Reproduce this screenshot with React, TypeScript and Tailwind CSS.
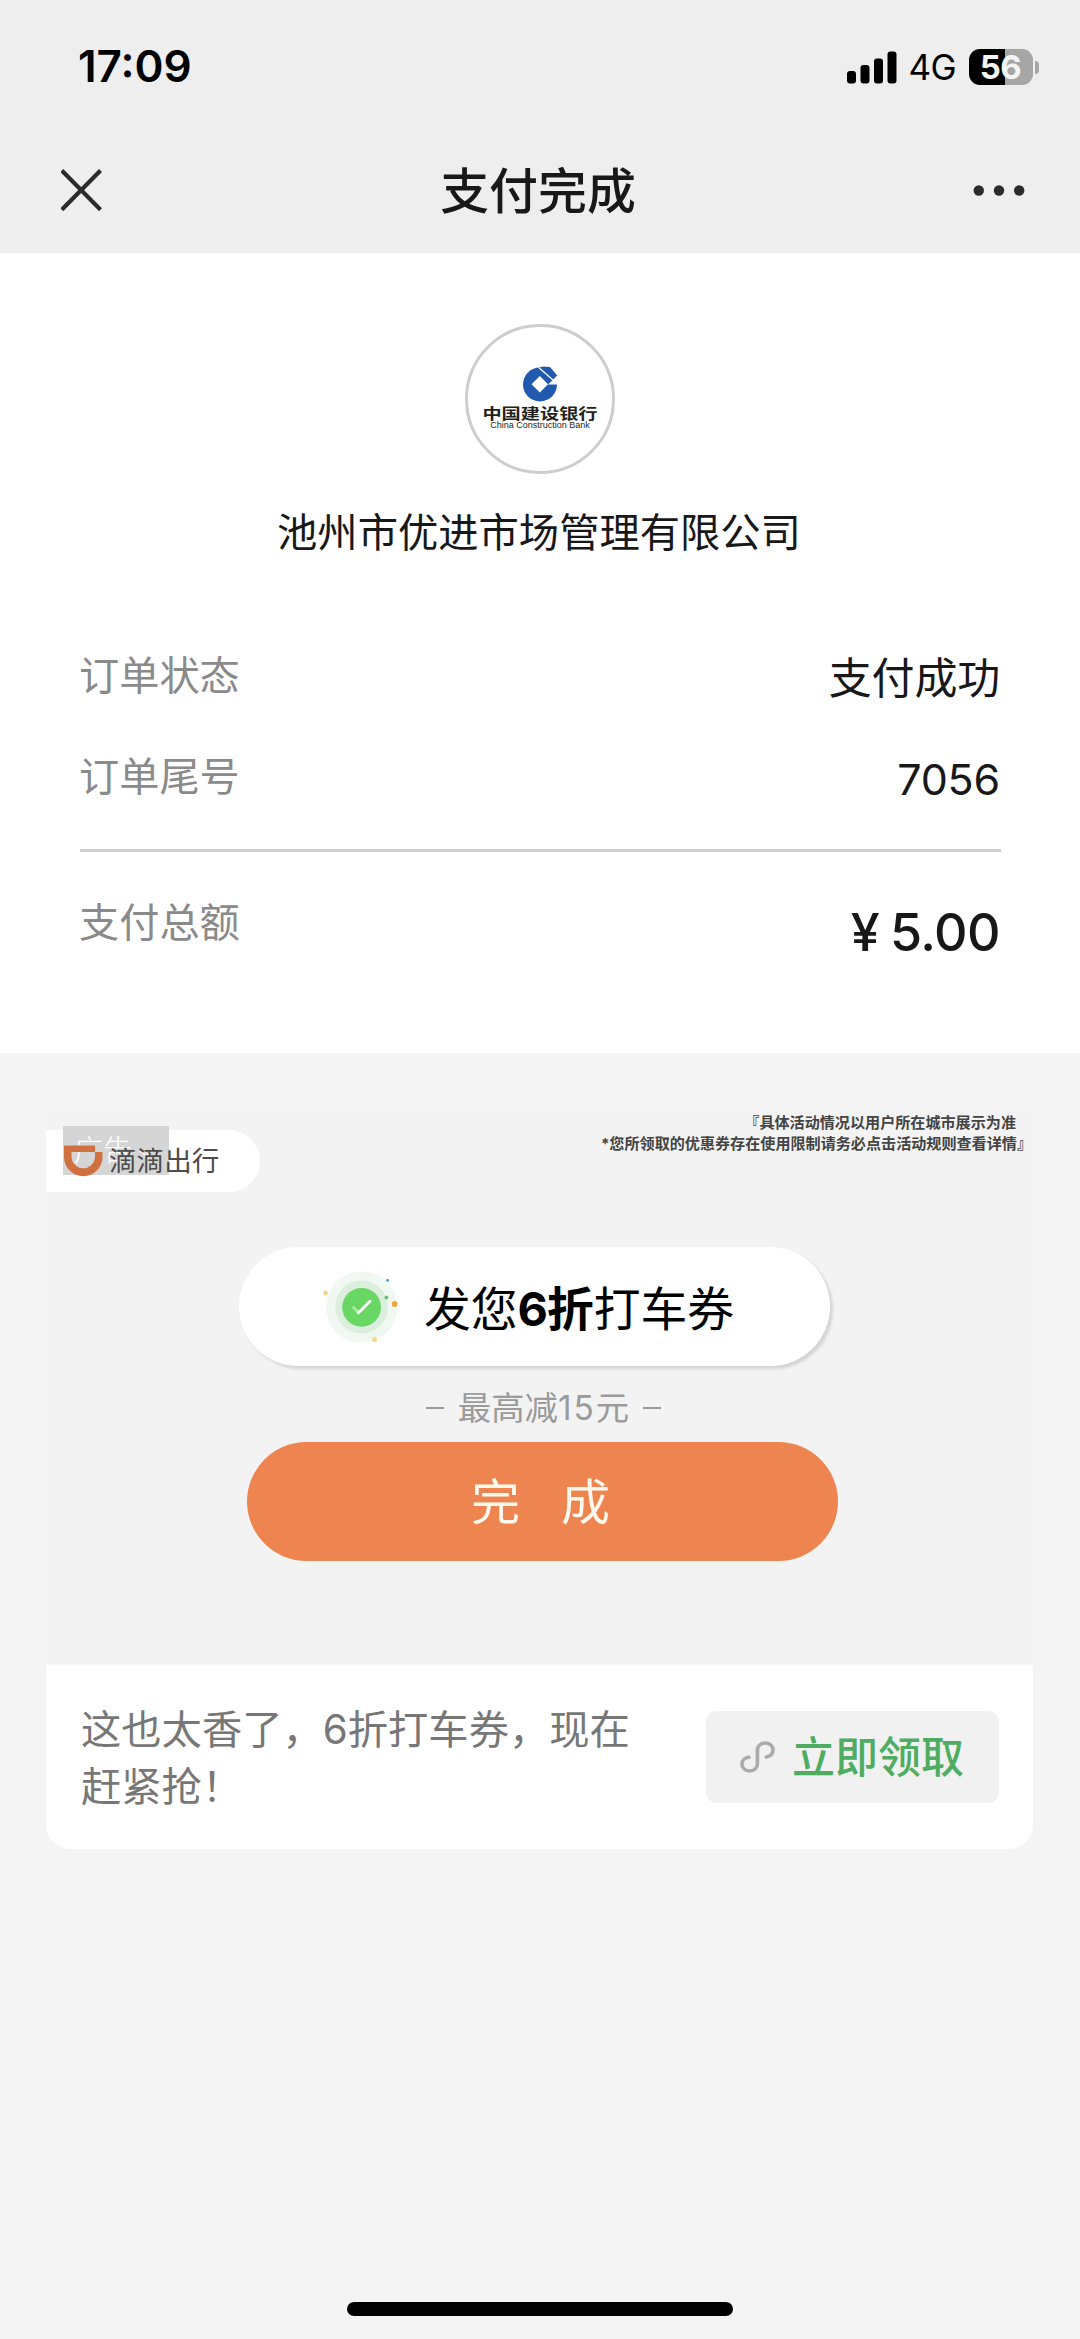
import type { ReactNode } from "react";
import clsx from "clsx";

const order = [
  { label: "订单状态", value: "支付成功" },
  { label: "订单尾号", value: "7056" },
];

function StatusBar() {
  return (
    <div className="flex h-[131px] items-start justify-between pt-[49px] pr-[41px] pl-[78px] text-black">
      <span className="text-[44px] leading-[35px] font-semibold">17:09</span>
      <div className="flex h-9 items-center">
        <svg className="h-[33px] w-[50px]" viewBox="0 0 50 33">
          <rect x="0" y="20" width="9" height="12.5" rx="3" />
          <rect x="13.5" y="14" width="9" height="18.5" rx="3" />
          <rect x="27" y="7.5" width="9" height="25" rx="3" />
          <rect x="40.5" y="0.5" width="9" height="32" rx="3" />
        </svg>
        <span className="ml-3 w-[60px] text-[35px] leading-[36px] tracking-[-0.5px]">4G</span>
        <div className="flex h-9 w-16 items-center justify-center rounded-[11px] bg-linear-to-r from-black from-[56%] to-[#a6a6a6] to-[56%]">
          <span className="text-[33px] leading-[40px] font-bold tracking-[-0.5px] text-[#f4f4f4]">
            56
          </span>
        </div>
        <div className="ml-[2px] h-[13px] w-[4.5px] rounded-r-full bg-[#a6a6a6]" />
      </div>
    </div>
  );
}

function NavBar() {
  return (
    <div className="flex h-[122px] items-start justify-between px-[61px] pt-[38px]">
      <svg className="h-[42px] w-[42px]" viewBox="0 0 42 42" stroke="#2b2b2b" strokeWidth="4.2">
        <path d="M.8 5.5 39.5 44.7M39.5 5.5 .8 44.7" transform="translate(0 -4)" />
      </svg>
      <h1 className="mt-[-7px] text-[48.9px] leading-[60px] font-medium text-[#181818]">支付完成</h1>
      <svg className="mr-[-36px] h-[42px] w-[82px]" viewBox="0 0 82 42" fill="#2b2b2b">
        <circle cx="5.8" cy="21.5" r="5.2" />
        <circle cx="26" cy="21.5" r="5.2" />
        <circle cx="46.2" cy="21.5" r="5.2" />
      </svg>
    </div>
  );
}

function BankLogo() {
  return (
    <div className="mx-auto flex size-[150px] flex-col items-center rounded-full border-[3px] border-[#cdcdcd] pt-[39px]">
      <svg className="h-[36px] w-[35px]" viewBox="0 0 35 36">
        <circle cx="17" cy="18.4" r="17" fill="#2059ae" />
        <path d="M25 18.4H36V6L30 12.6Z" fill="#fff" />
        <path d="M17 1.2 20 .4 27 .9 34.2 9.6 25.8 17.8 17 9.6Z" fill="#2059ae" />
        <path d="M16.8 10 25.1 18.3 16.8 26.6 8.5 18.3Z" fill="#fff" />
        <path d="M16 1.7 30 14" stroke="#fff" strokeWidth="1.2" fill="none" />
      </svg>
      <span className="mt-[3px] h-[18px] scale-y-[0.76] text-[19.2px] leading-[18px] font-bold whitespace-nowrap text-[#231f20]">
        中国建设银行
      </span>
      <span className="mt-[-3px] h-[10px] font-['Liberation_Sans'] text-[9px] leading-[10px] whitespace-nowrap text-[#231f20]">
        China Construction Bank
      </span>
    </div>
  );
}

function Row({ label, children, className }: { label: string; children: ReactNode; className?: string }) {
  return (
    <div className={clsx("flex justify-between", className)}>
      <span className="ml-[-1px] text-[40.2px] leading-[56px] text-[#8a8a8a]">{label}</span>
      {children}
    </div>
  );
}

function DidiTag() {
  return (
    <div className="relative mt-5 flex h-[62px] w-[214px] items-center rounded-r-full bg-white">
      {/* ad label sits under the brand */}
      <div className="absolute top-[-4px] left-[17px] flex h-[49px] w-[106px] items-center bg-[#d5d5d5] pl-[11px] text-white">
        <span className="text-[29px] leading-[40px] font-light">广告</span>
        <svg className="mt-1 ml-[6px] h-3 w-4" viewBox="0 0 16 12" fill="none" stroke="#fff" strokeWidth="2">
          <path d="M1 2 8 9 15 2" />
        </svg>
      </div>
      <svg className="relative ml-[18px] h-[32px] w-[39px]" viewBox="0 0 39 32">
        <path
          d="M0 .5H31V7H38.5V12A19.2 19.2 0 0 1 0 12ZM7.5 7V12.5A11.8 11.8 0 0 0 31 12.5V7Z"
          fill="#d0703f"
        />
      </svg>
      <span className="relative ml-[6px] text-[27.6px] leading-[40px] text-[#4c4c4c]">滴滴出行</span>
    </div>
  );
}

function CheckBadge() {
  return (
    <svg className="h-[74px] w-[78px]" viewBox="322 1270 78 74">
      <circle cx="361.6" cy="1307" r="35.6" fill="#f1f7f1" />
      <circle cx="361.6" cy="1307" r="26.4" fill="#dceedd" />
      <circle cx="361.6" cy="1307.3" r="19.4" fill="#69d763" />
      <path d="M353.5 1307.5 358.5 1312.5" stroke="#a9e8a5" strokeWidth="3" strokeLinecap="round" />
      <path d="M358.5 1312.7 370 1301.3" stroke="#fff" strokeWidth="3" strokeLinecap="round" />
      <circle cx="325.6" cy="1293" r="2.4" fill="#f3d38f" />
      <circle cx="387.6" cy="1280.4" r="1.4" fill="#4a90c4" />
      <circle cx="386.4" cy="1297.4" r="1.9" fill="#5cc46a" />
      <circle cx="394.6" cy="1304" r="2.9" fill="#eba63c" />
      <circle cx="374.6" cy="1339.4" r="2.5" fill="#f0d795" />
    </svg>
  );
}

function AdCard() {
  return (
    <section className="mx-[46px] mt-[57px] w-[987px] overflow-hidden rounded-b-3xl bg-[#f3f3f3]">
      <div className="flex h-[555px] flex-col">
        <div className="flex h-[137px] justify-between">
          <DidiTag />
          <div className="pt-[2px] text-right text-[15.1px] leading-[21px] font-bold whitespace-nowrap text-[#444]">
            <p className="pr-[17px]">『具体活动情况以用户所在城市展示为准</p>
            <p className="pr-px">*您所领取的优惠券存在使用限制请务必点击活动规则查看详情』</p>
          </div>
        </div>
        <div className="ml-[193px] flex h-[119px] w-[591px] items-center rounded-full bg-white pl-[83px] shadow-[3px_3px_3px_#d4d4d4]">
          <CheckBadge />
          <p className="ml-[24px] pt-[4px] text-[46.8px] leading-[60px] text-black">
            发您
            <b>
              <span className="tracking-[-1px]">6</span>折
            </b>
            打车券
          </p>
        </div>
        <p className="ml-[8px] flex h-[76px] items-center justify-center gap-[14px] pt-[8px] text-[33.4px] leading-[40px] text-[#9b9b9b]">
          <span className="h-[2px] w-[18px] bg-[#9b9b9b]" />
          <span>
            最高减<span className="tracking-[2px]">15</span>元
          </span>
          <span className="h-[2px] w-[18px] bg-[#9b9b9b]" />
        </p>
        <button className="ml-[201px] flex h-[119px] w-[591px] items-center justify-center gap-[41px] rounded-full bg-[#ee8551] pt-[2px] pr-1 text-[49px] leading-[60px] text-[#fff8ee]">
          <span>完</span>
          <span>成</span>
        </button>
      </div>
      <div className="flex h-[184px] items-center justify-between bg-white pr-[34px] pl-[35px]">
        <p className="pt-px text-[40.3px] leading-[57px] whitespace-nowrap text-[#777]">
          这也太香了，6折打车券，现在
          <br />
          赶紧抢！
        </p>
        <button className="flex h-[92px] w-[293px] items-center rounded-[11px] bg-[#f1f1f1] pl-[34px] text-[43px] leading-[60px] font-medium text-[#4fad62]">
          <svg
            className="mr-[17px] h-[32px] w-[35px]"
            viewBox="0 0 35 32"
            fill="none"
            stroke="#ababab"
            strokeWidth="3.6"
            strokeLinecap="round"
          >
            <path d="M9 16.2C4.8 16.6 1.9 19.5 1.9 23C1.9 27 5.2 30 9.6 30C14 30 17.4 27 17.4 23V9C17.4 5 20.8 2 25.3 2C29.8 2 33 5 33 8.8C33 12.5 30.4 15.2 26.4 15.9" />
          </svg>
          立即领取
        </button>
      </div>
    </section>
  );
}

export default function App() {
  return (
    <div className="flex h-[2339px] w-[1080px] flex-col bg-[#f4f4f4] font-['Inter','Noto_Sans_CJK_SC',sans-serif]">
      <header className="bg-[#eeeeee]">
        <StatusBar />
        <NavBar />
      </header>

      <main className="h-[800px] bg-white px-20 pt-[71px] text-[#181818]">
        <BankLogo />
        <p className="mt-[29px] pr-[2px] text-center text-[40.3px] leading-[60px]">
          池州市优进市场管理有限公司
        </p>

        <div className="mt-[85px] mr-[-1px] border-b-[3px] border-[#cfcfcf]">
          {order.map((item) => (
            <Row key={item.label} label={item.label} className="h-[100.5px] pr-px">
              <span className="text-[43px] leading-[60px] tracking-[-0.2px]">{item.value}</span>
            </Row>
          ))}
        </div>
        <Row label="支付总额" className="pt-[43px]">
          <span className="pt-[8px] text-[52px] leading-[60px] font-medium tracking-[-0.6px]">
            <span className="mr-[11px]">¥</span>5.00
          </span>
        </Row>
      </main>

      <AdCard />

      <div className="mx-auto mt-auto mb-[23px] h-[14px] w-[386px] rounded-full bg-black" />
    </div>
  );
}
